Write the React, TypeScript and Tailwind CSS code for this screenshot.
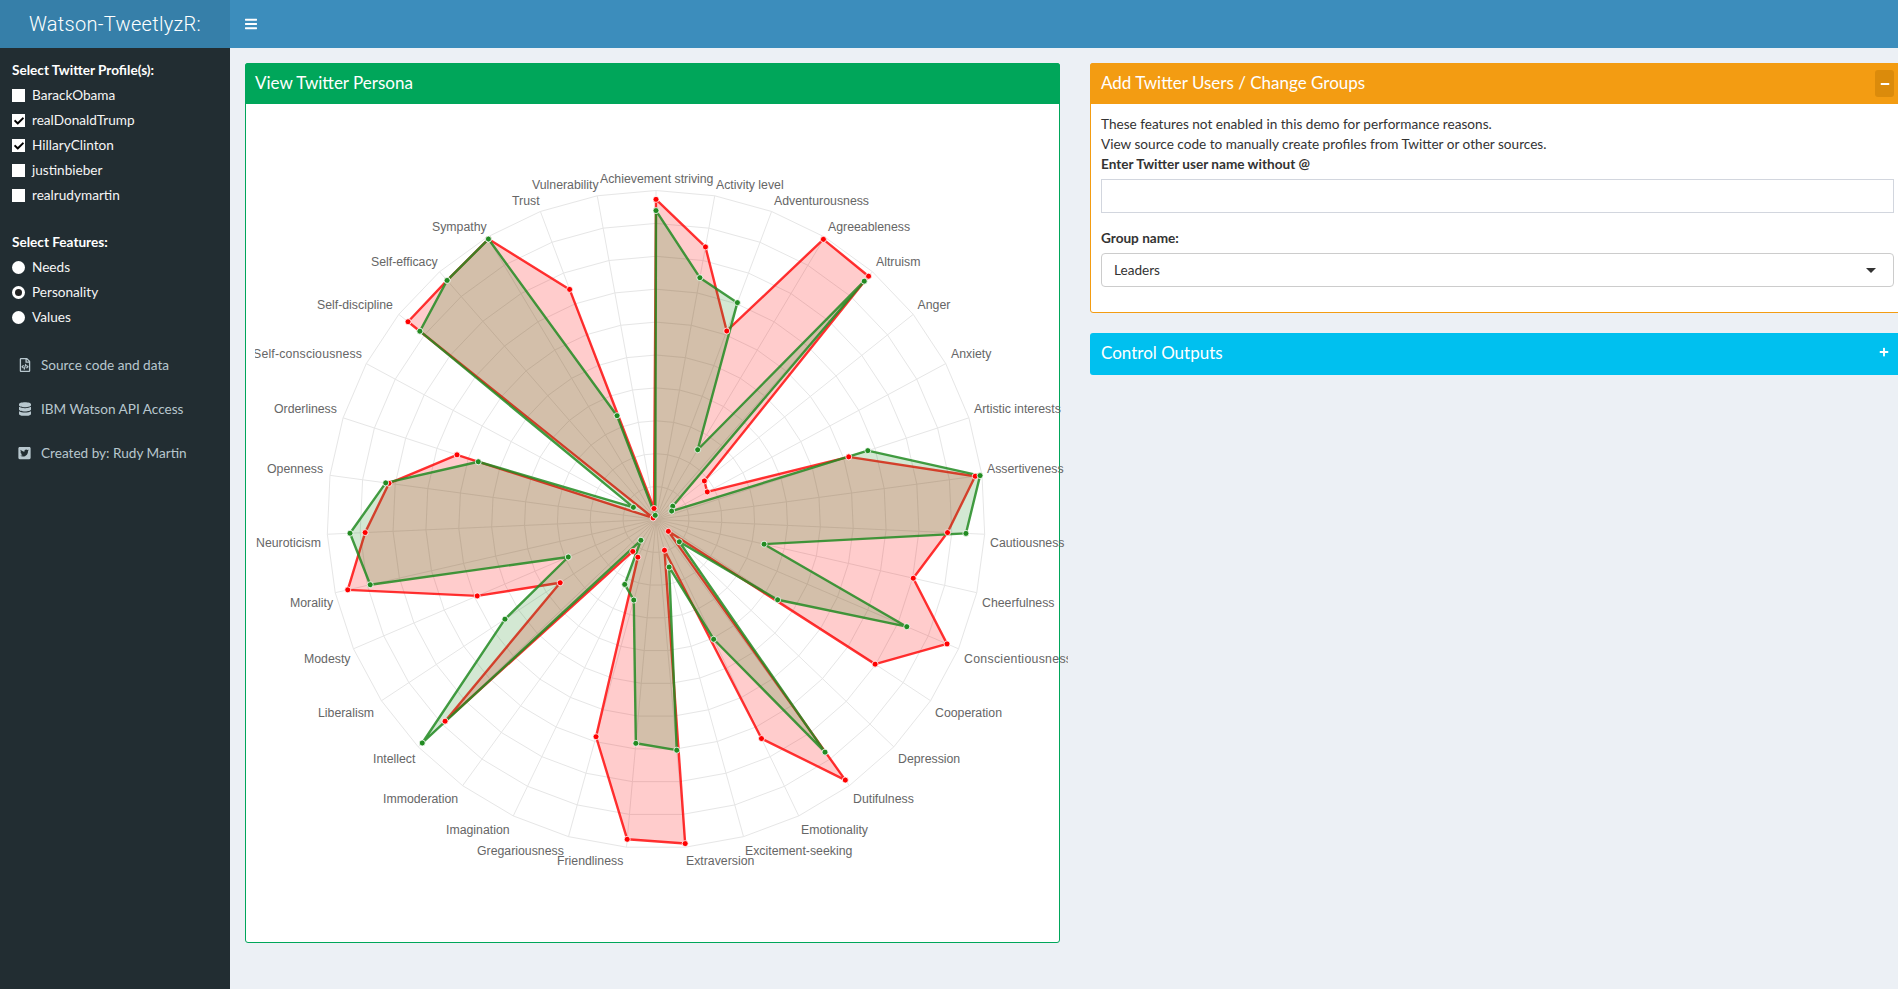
import { FaBars, FaCheck, FaDatabase, FaMinus, FaPlus, FaRegFileCode, FaTwitterSquare } from "react-icons/fa";

const CX = 656;
const CY = 519.5;
const R = 329;

const red = [
  0.973, 0.842, 0.612, 0.992, 0.982, 0.188, 0.177, 0.616, 0.979, 0.887, 0.802, 0.962, 0.798, 0.052, 0.979, 0.739, 0.097, 0.989,
  0.976, 0.685, 0.127, 0.12, 0.887, 0.349, 0.591, 0.961, 0.885, 0.819, 0.636, 0.01, 0.964, 0.965, 0.993, 0.747, 0.034,
];
const green = [
  0.939, 0.747, 0.704, 0.247, 0.962, 0.065, 0.054, 0.677, 0.994, 0.943, 0.337, 0.829, 0.443, 0.098, 0.874, 0.404, 0.15, 0.704,
  0.683, 0.254, 0.219, 0.078, 0.983, 0.55, 0.29, 0.891, 0.931, 0.829, 0.568, 0.078, 0.918, 0.965, 0.993, 0.337, 0.013,
];

// x is the left edge of the label; w stretches the two that the chart's edge cuts off
const labels: { t: string; x: number; y: number; w?: number }[] = [
  { t: "Achievement striving", x: 600, y: 179 },
  { t: "Activity level", x: 716, y: 185 },
  { t: "Adventurousness", x: 774, y: 201 },
  { t: "Agreeableness", x: 828, y: 227 },
  { t: "Altruism", x: 876, y: 262 },
  { t: "Anger", x: 917.5, y: 305 },
  { t: "Anxiety", x: 951, y: 354 },
  { t: "Artistic interests", x: 974, y: 409 },
  { t: "Assertiveness", x: 987, y: 469 },
  { t: "Cautiousness", x: 990, y: 543 },
  { t: "Cheerfulness", x: 982, y: 603 },
  { t: "Conscientiousness", x: 964, y: 659, w: 108 },
  { t: "Cooperation", x: 935, y: 713 },
  { t: "Depression", x: 898, y: 759 },
  { t: "Dutifulness", x: 853, y: 799 },
  { t: "Emotionality", x: 801, y: 830 },
  { t: "Excitement-seeking", x: 745, y: 851 },
  { t: "Extraversion", x: 686, y: 861 },
  { t: "Friendliness", x: 557, y: 861 },
  { t: "Gregariousness", x: 477, y: 851 },
  { t: "Imagination", x: 446, y: 830 },
  { t: "Immoderation", x: 383, y: 799 },
  { t: "Intellect", x: 373, y: 759 },
  { t: "Liberalism", x: 318, y: 713 },
  { t: "Modesty", x: 304, y: 659 },
  { t: "Morality", x: 290, y: 603 },
  { t: "Neuroticism", x: 256, y: 543 },
  { t: "Openness", x: 267, y: 469 },
  { t: "Orderliness", x: 274, y: 409 },
  { t: "Self-consciousness", x: 253, y: 354, w: 109 },
  { t: "Self-discipline", x: 317, y: 305 },
  { t: "Self-efficacy", x: 371, y: 262 },
  { t: "Sympathy", x: 432, y: 227 },
  { t: "Trust", x: 512, y: 201 },
  { t: "Vulnerability", x: 532, y: 185 },
];

function pt(i: number, v: number): [number, number] {
  const a = (i * 2 * Math.PI) / 35;
  return [CX + R * v * Math.sin(a), CY - R * v * Math.cos(a)];
}

function toPoints(vals: number[]) {
  return vals.map((v, i) => pt(i, v).join(",")).join(" ");
}

function RadarChart() {
  const rings = [1, 2, 3, 4, 5, 6, 7, 8, 9, 10];
  return (
    <svg width={813} height={838} viewBox="255 104 813 838" className="block shrink-0">
      {rings.map((r) => (
        <polygon key={r} points={toPoints(red.map(() => r / 10))} fill="none" stroke="#e6e6e6" strokeWidth={1} />
      ))}
      {red.map((_, i) => {
        const [x, y] = pt(i, 1);
        return <line key={i} x1={CX} y1={CY} x2={x} y2={y} stroke="#e6e6e6" strokeWidth={1} />;
      })}
      {labels.map((l) => (
        <text
          key={l.t}
          x={l.x}
          y={l.y + 4}
          textLength={l.w}
          fill="#666"
          fontSize={12.3}
          fontFamily="'Liberation Sans', Arial, sans-serif"
        >
          {l.t}
        </text>
      ))}
      <polygon points={toPoints(red)} fill="rgba(255,0,0,0.2)" stroke="rgba(255,0,0,0.8)" strokeWidth={2.4} strokeLinejoin="round" />
      <polygon points={toPoints(green)} fill="rgba(34,139,34,0.2)" stroke="rgba(34,139,34,0.85)" strokeWidth={2.4} strokeLinejoin="round" />
      {red.map((v, i) => {
        const [x, y] = pt(i, v);
        return <circle key={i} cx={x} cy={y} r={3} fill="#ff0000" stroke="#fff" strokeWidth={0.8} />;
      })}
      {green.map((v, i) => {
        const [x, y] = pt(i, v);
        return <circle key={i} cx={x} cy={y} r={3} fill="#228b22" stroke="#fff" strokeWidth={0.8} />;
      })}
    </svg>
  );
}

function Check({ label, checked }: { label: string; checked?: boolean }) {
  return (
    <div className="flex items-center h-[25px] pl-3 text-[#f5f5f5]">
      <span className="w-[13px] h-[13px] bg-white flex items-center justify-center text-black">
        {checked && <FaCheck className="w-[10px] h-[10px]" />}
      </span>
      <span className="ml-[7px] -mt-px">{label}</span>
    </div>
  );
}

function Radio({ label, checked }: { label: string; checked?: boolean }) {
  return (
    <div className="flex items-center h-[25px] pl-3 text-[#f5f5f5]">
      <span className="w-[13px] h-[13px] rounded-full bg-white flex items-center justify-center">
        {checked && <span className="w-[7px] h-[7px] rounded-full bg-[#222]" />}
      </span>
      <span className="ml-[7px] -mt-px">{label}</span>
    </div>
  );
}

function NavLink({ icon, label }: { icon: React.ReactNode; label: string }) {
  return (
    <div className="flex items-center h-[44px] pl-[18px] text-[#b8c7ce]">
      <span className="w-[13px] flex justify-center">{icon}</span>
      <span className="ml-[10px] -mt-px">{label}</span>
    </div>
  );
}

export default function App() {
  return (
    <div className="w-[1898px] h-[989px] overflow-hidden bg-[#ecf0f5] text-[13.6px] leading-[20px] text-[#333] font-['Lato',sans-serif]">
      <header className="flex h-[48px] bg-[#3c8dbc] text-white">
        <div className="w-[230px] bg-[#367fa9] flex items-center justify-center text-[20px] font-light tracking-[0.3px] font-['Roboto',sans-serif]">
          Watson-TweetlyzR:
        </div>
        <div className="pl-[15px] flex items-center">
          <FaBars className="w-[12px] h-[14px]" />
        </div>
      </header>
      <div className="flex h-[941px]">
        <aside className="w-[230px] bg-[#222d32] shrink-0 pt-[12px]">
          <div className="pl-3 font-bold text-white h-[20px]">Select Twitter Profile(s):</div>
          <div className="mt-[3px]">
            <Check label="BarackObama" />
            <Check label="realDonaldTrump" checked />
            <Check label="HillaryClinton" checked />
            <Check label="justinbieber" />
            <Check label="realrudymartin" />
          </div>
          <div className="pl-3 font-bold text-white h-[20px] mt-[24px]">Select Features:</div>
          <div className="mt-[3px]">
            <Radio label="Needs" />
            <Radio label="Personality" checked />
            <Radio label="Values" />
          </div>
          <div className="mt-[13px]">
            <NavLink icon={<FaRegFileCode className="w-[12px] h-[14px]" />} label="Source code and data" />
            <NavLink icon={<FaDatabase className="w-[12px] h-[14px]" />} label="IBM Watson API Access" />
            <NavLink icon={<FaTwitterSquare className="w-[13px] h-[14px]" />} label="Created by: Rudy Martin" />
          </div>
        </aside>
        <main className="flex gap-[30px] pl-[15px] pt-[15px] items-start">
          <section className="w-[815px] shrink-0 h-[880px] border border-[#00a65a] rounded-[3px] bg-white">
            <div className="h-[41px] -mt-px -mx-px pb-[2px] bg-[#00a65a] rounded-t-[3px] text-white text-[17px] flex items-center pl-[10px]">
              View Twitter Persona
            </div>
            <div className="pl-[9px]">
              <RadarChart />
            </div>
          </section>
          <div className="w-[815px] shrink-0 flex flex-col gap-[20px]">
            <section className="h-[250px] border border-[#f39c12] rounded-[3px] bg-white">
              <div className="h-[41px] -mt-px -mx-px bg-[#f39c12] rounded-t-[3px] text-white text-[17px] flex items-center justify-between pl-[11px] pr-[11px]">
                <span className="-mt-[2px]">Add Twitter Users / Change Groups</span>
                <span className="w-[19px] h-[27px] bg-[#db8b0b] rounded-[3px] flex items-center justify-center">
                  <FaMinus className="w-[10px] h-[10px]" />
                </span>
              </div>
              <div className="pt-[10px] px-[10px]">
                <p>These features not enabled in this demo for performance reasons.</p>
                <p>View source code to manually create profiles from Twitter or other sources.</p>
                <p className="font-bold">Enter Twitter user name without @</p>
                <input className="block w-full h-[34px] mt-[5px] border border-[#d2d6de] bg-white" />
                <p className="font-bold mt-[15px]">Group name:</p>
                <div className="h-[34px] mt-[5px] border border-[#ccc] rounded-[4px] flex items-center justify-between pl-[12px] pr-[17px]">
                  <span>Leaders</span>
                  <span className="w-0 h-0 border-x-[5px] border-x-transparent border-t-[5px] border-t-[#333]" />
                </div>
              </div>
            </section>
            <section className="h-[42px] bg-[#00c0ef] rounded-[3px] text-white text-[17px] flex items-center justify-between pl-[11px] pr-[16px]">
              <span className="-mt-[2px]">Control Outputs</span>
              <FaPlus className="w-[10px] h-[10px] -mt-1" />
            </section>
          </div>
        </main>
      </div>
    </div>
  );
}
